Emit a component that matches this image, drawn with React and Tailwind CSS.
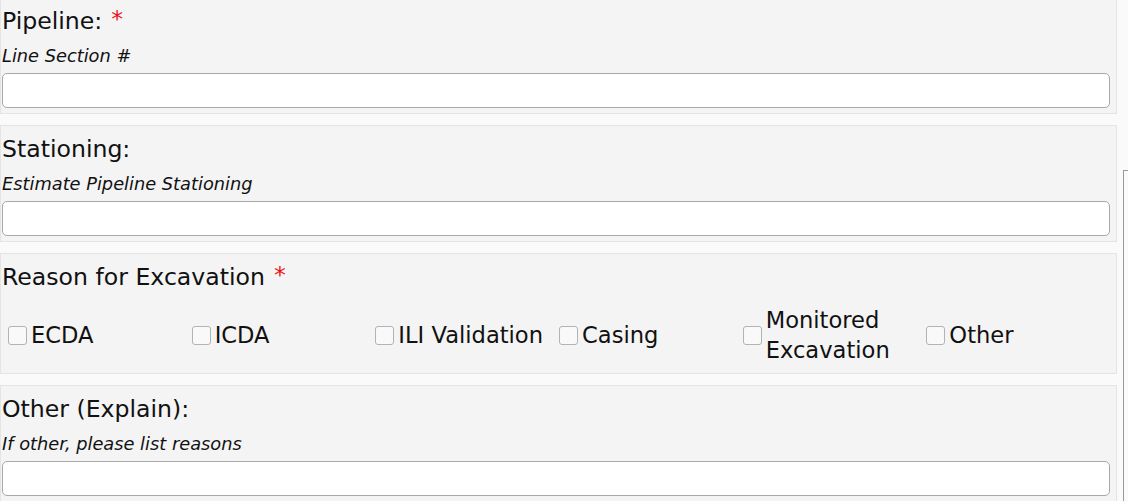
import React from "react";

const font = { fontFamily: '"DejaVu Sans", Tahoma, Verdana, sans-serif' };

function Heading({ children, required }) {
  return (
    <div className="text-[23.6px] leading-[32px] text-[#111]">
      {children}
      {required && <span className="text-[#e8141b] ml-[9px] relative top-[-2px]">*</span>}
    </div>
  );
}

function Sub({ children }) {
  return <div className="italic text-[17.8px] leading-[24px] mt-[7px] text-[#111]">{children}</div>;
}

function Input() {
  return <div className="mt-[5px] h-[35px] w-full bg-white border border-[#a8a8a8] rounded-[5px]" />;
}

function TextPanel({ title, sub, required }) {
  return (
    <div className="bg-[#f4f4f4] border border-[#e4e4e4] pl-[1px] pr-[6px] pt-[7px] pb-[5px]">
      <Heading required={required}>{title}</Heading>
      <Sub>{sub}</Sub>
      <Input />
    </div>
  );
}

function Check({ label }) {
  return (
    <div className="w-[184px] flex items-center">
      <div className="w-[19px] h-[19px] shrink-0 bg-[#f9f9f9] border border-[#b3b3b3] rounded-[3px]" />
      <div className="ml-[4px] text-[22.6px] leading-[30px] text-[#111]">{label}</div>
    </div>
  );
}

export default function App() {
  return (
    <div style={font} className="w-[1128px] h-[501px] overflow-hidden bg-[#fafafa] flex">
      <div className="w-[1117px] shrink-0 flex flex-col gap-[11px] mt-[-3px]">
        <TextPanel title="Pipeline:" sub="Line Section #" required />
        <TextPanel title="Stationing:" sub="Estimate Pipeline Stationing" />
        <div className="bg-[#f4f4f4] border border-[#e4e4e4] pl-[1px] pr-[6px] pt-[7px] pb-[8px]">
          <Heading required>Reason for Excavation</Heading>
          <div className="flex items-center mt-[12px] pl-[6px] h-[60px]">
            <Check label="ECDA" />
            <Check label="ICDA" />
            <Check label="ILI Validation" />
            <Check label="Casing" />
            <Check label={<>Monitored<br />Excavation</>} />
            <Check label="Other" />
          </div>
        </div>
        <TextPanel title="Other (Explain):" sub="If other, please list reasons" />
      </div>
      <div className="flex-1 flex">
        <div className="ml-[6px] mt-[170px] flex-1 border-l border-t border-[#9a9a9a]" />
      </div>
    </div>
  );
}
